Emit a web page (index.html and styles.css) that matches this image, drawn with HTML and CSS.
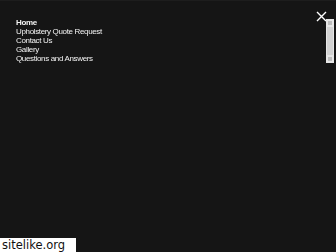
FILE: index.html
```html
<!DOCTYPE html>
<html lang="en">
<head>
    <meta charset="UTF-8">
    <title>Menu</title>
    <link rel="stylesheet" href="styles.css">
</head>
<body>
    <div class="overlay">
        <a class="close" href="#">
            <svg width="11" height="11" viewBox="0 0 11 11">
                <path d="M1 1 L10 10 M10 1 L1 10" stroke="#fff" stroke-width="1.4"></path>
            </svg>
        </a>
        <ul class="menu">
            <li><a class="active" href="#">Home</a></li>
            <li><a href="#">Upholstery Quote Request</a></li>
            <li><a href="#">Contact Us</a></li>
            <li><a href="#">Gallery</a></li>
            <li><a href="#">Questions and Answers</a></li>
        </ul>
        <div class="scroll">
            <div class="arrow up"></div>
            <div class="thumb"></div>
            <div class="arrow down"></div>
        </div>
    </div>
    <div class="badge">sitelike.org</div>
</body>
</html>
```

FILE: styles.css
```css
*{
    margin: 0;
    padding: 0;
    box-sizing: border-box;
    font-family: "Liberation Sans", Arial, sans-serif;
}

body{
    width: 336px;
    height: 252px;
    background-color: #151515;
    overflow: hidden;
}

.overlay{
    height: 252px;
    padding: 17px 0 0 16px;
    border-top: 1px solid #1d1d1d;
}

.close{
    position: absolute;
    top: 8px;
    left: 316px;
}

.menu{
    list-style: none;
    will-change: transform;
}

.menu li{
    font-size: 8px;
    line-height: 9px;
    letter-spacing: -0.35px;
}

.menu a{
    color: #f2f2f2;
    text-decoration: none;
}

.menu a.active{
    font-weight: bold;
}

.scroll{
    position: absolute;
    top: 19px;
    left: 326px;
    width: 8px;
    height: 44px;
    background: #e6e6e6;
    display: flex;
    flex-direction: column;
    justify-content: space-between;
    padding: 2px 0;
}

.scroll .arrow{
    height: 4px;
    background: #bdbdbd;
    margin: 0 2px;
}

.scroll .thumb{
    flex: 1;
    margin: 2px 1px;
    background: #d2d2d2;
}

.badge{
    position: absolute;
    left: 0;
    bottom: 0;
    width: 76px;
    height: 14px;
    background: #fff;
    color: #111;
    font-family: "DejaVu Sans", sans-serif;
    font-size: 11.5px;
    line-height: 14px;
    padding-left: 2px;
}
```
